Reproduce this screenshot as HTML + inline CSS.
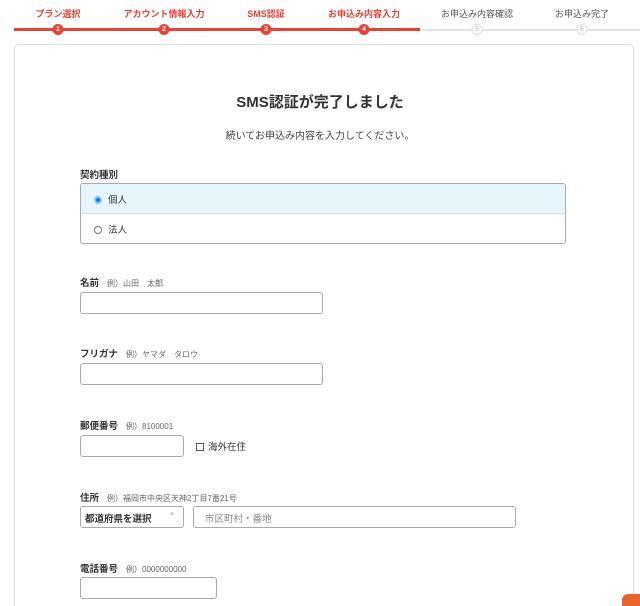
<!DOCTYPE html>
<html><head><meta charset="utf-8"><style>
*{margin:0;padding:0;box-sizing:border-box}
html{height:606px;overflow:hidden}
body{width:640px;height:606px;overflow:hidden;background:#fff;font-family:"Liberation Sans","Noto Sans CJK JP",sans-serif;color:#333;position:relative}
.a{position:absolute;white-space:nowrap}
.st{font-size:9px;font-weight:bold;top:7px;transform:translateX(-50%)}
.r{color:#e84233}.g{color:#555;font-weight:normal}
.c{position:absolute;top:24px;width:11px;height:11px;border-radius:50%;font-size:7px;line-height:11px;text-align:center;transform:translateX(-50%);font-weight:bold}
.cr{background:#e84233;color:#fff}.cg{background:#fff;border:1px solid #ddd;color:#ccc;line-height:9px}
.lb{font-size:9.5px;font-weight:bold;color:#333}
.lb span{font-size:8px;font-weight:normal;color:#666;margin-left:8px}
.in{position:absolute;border:1px solid #aaa;border-radius:3px;background:#fff;height:22px}
</style></head><body>
<div class="a st r" style="left:58px">プラン選択</div>
<div class="a st r" style="left:164px">アカウント情報入力</div>
<div class="a st r" style="left:266px">SMS認証</div>
<div class="a st r" style="left:364px">お申込み内容入力</div>
<div class="a st g" style="left:477px">お申込み内容確認</div>
<div class="a st g" style="left:582px">お申込み完了</div>
<div class="a" style="left:14px;top:28px;width:406px;height:3px;background:#e84233"></div>
<div class="a" style="left:420px;top:29px;width:220px;height:2px;background:#e3e3e3"></div>
<div class="c cr" style="left:58px">1</div><div class="c cr" style="left:164px">2</div><div class="c cr" style="left:266px">3</div><div class="c cr" style="left:364px">4</div><div class="c cg" style="left:477px">5</div><div class="c cg" style="left:582px">6</div>
<div class="a" style="left:14px;top:44px;width:620px;height:562px;border:1px solid #ddd;border-bottom:none;border-radius:5px 5px 0 0"></div>
<div class="a" style="left:0;width:640px;top:91px;text-align:center;font-size:15px;font-weight:bold;color:#333">SMS認証が完了しました</div>
<div class="a" style="left:0;width:640px;top:127px;text-align:center;font-size:10px;color:#444">続いてお申込み内容を入力してください。</div>
<div class="a lb" style="left:80px;top:167px">契約種別</div>
<div class="a" style="left:80px;top:183px;width:486px;height:61px;border:1px solid #aaa;border-radius:3px;overflow:hidden">
<div style="height:30px;background:#e6f7fc;border-bottom:1px solid #ddd;font-size:9.5px;padding:8px 0 0 13px"><span style="display:inline-block;width:8px;height:8px;border-radius:50%;border:2px solid #8fc3f5;background:#1a73e8;vertical-align:-1px;margin-right:6px"></span>個人</div>
<div style="font-size:9.5px;padding:8px 0 0 13px"><span style="display:inline-block;width:8px;height:8px;border-radius:50%;border:1px solid #777;vertical-align:-1px;margin-right:6px"></span>法人</div>
</div>
<div class="a lb" style="left:80px;top:275px">名前<span>例）山田　太郎</span></div>
<div class="in" style="left:80px;top:292px;width:243px"></div>
<div class="a lb" style="left:80px;top:346px">フリガナ<span>例）ヤマダ　タロウ</span></div>
<div class="in" style="left:80px;top:363px;width:243px"></div>
<div class="a lb" style="left:80px;top:418px">郵便番号<span>例）8100001</span></div>
<div class="in" style="left:80px;top:435px;width:104px"></div>
<div class="a" style="left:196px;top:439px;font-size:9.5px"><span style="display:inline-block;width:8px;height:8px;border:1px solid #555;vertical-align:-1px;margin-right:4px"></span>海外在住</div>
<div class="a lb" style="left:80px;top:490px">住所<span>例）福岡市中央区天神2丁目7番21号</span></div>
<div class="in" style="left:80px;top:506px;width:104px;font-size:9.5px;font-weight:bold;padding:4px 0 0 4px">都道府県を選択<span style="position:absolute;right:8px;top:5px;font-size:6px;color:#bbb;font-weight:normal">▼</span></div>
<div class="in" style="left:193px;top:506px;width:323px;font-size:9.5px;color:#888;padding:4px 0 0 11px">市区町村・番地</div>
<div class="a lb" style="left:80px;top:561px">電話番号<span>例）0000000000</span></div>
<div class="in" style="left:80px;top:577px;width:137px"></div>
<div class="a" style="left:622px;top:594px;width:24px;height:20px;background:#e8642a;border-radius:6px 0 0 0"></div>
</body></html>
